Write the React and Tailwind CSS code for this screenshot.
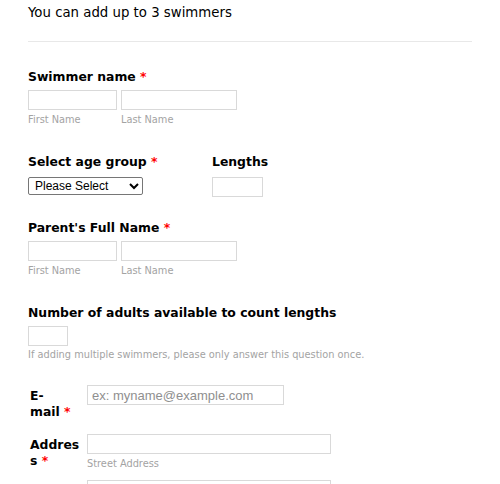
export default function App() {
  const label = "font-bold text-[12.4px] leading-[17px] text-black"
  const req = <span className="text-[#ff0000]"> *</span>
  const input = "block h-[20px] border border-[#d9d9d9] bg-white"
  const sub = "mt-[3px] text-[9.8px] leading-[14px] text-[#a3a3a3]"

  return (
    <div className="min-h-[484px] bg-white font-['DejaVu_Sans',Verdana,sans-serif] text-black">
      <div className="px-[28px] pt-[4px]">
        <p className="text-[13.3px] leading-[18px]">You can add up to 3 swimmers</p>
        <div className="mt-[19px] h-px bg-[#e8e8e8]" />

        <div className="mt-[26px]">
          <p className={label}>Swimmer name{req}</p>
          <div className="mt-[5px] flex gap-[4px]">
            <div>
              <input className={`${input} w-[89px]`} />
              <p className={sub}>First Name</p>
            </div>
            <div>
              <input className={`${input} w-[116px]`} />
              <p className={sub}>Last Name</p>
            </div>
          </div>
        </div>

        <div className="mt-[26px] flex">
          <div className="w-[184px]">
            <p className={label}>Select age group{req}</p>
            <select className="mt-[7px] block h-[18px] w-[115px] rounded-[2px] border border-[#767676] bg-white px-[2px] font-['Liberation_Sans',Arial,sans-serif] text-[12px] leading-[14px] text-black">
              <option>Please Select</option>
            </select>
          </div>
          <div>
            <p className={label}>Lengths</p>
            <input className={`${input} mt-[7px] h-[19px] w-[51px]`} />
          </div>
        </div>

        <div className="mt-[22px]">
          <p className={label}>Parent's Full Name{req}</p>
          <div className="mt-[5px] flex gap-[4px]">
            <div>
              <input className={`${input} w-[89px]`} />
              <p className={sub}>First Name</p>
            </div>
            <div>
              <input className={`${input} w-[116px]`} />
              <p className={sub}>Last Name</p>
            </div>
          </div>
        </div>

        <div className="mt-[26px]">
          <p className={label}>Number of adults available to count lengths</p>
          <input className={`${input} mt-[5px] w-[40px]`} />
          <p className="mt-[2px] text-[9.8px] leading-[14px] text-[#a3a3a3]">
            If adding multiple swimmers, please only answer this question once.
          </p>
        </div>

        <div className="mt-[23px] flex gap-[7px] pl-[2px]">
          <p className="w-[50px] pt-[3px] text-[12.4px] font-bold leading-[16px]">
            E-
            <br />
            mail{req}
          </p>
          <input
            placeholder="ex: myname@example.com"
            className={`${input} w-[197px] px-[4px] font-['Liberation_Sans',Arial,sans-serif] text-[13px] placeholder:text-[#8f8f8f]`}
          />
        </div>

        <div className="mt-[14px] flex gap-[7px] pl-[2px]">
          <p className="w-[50px] pt-[3px] text-[12.4px] font-bold leading-[16px]">
            Addres
            <br />
            s{req}
          </p>
          <div>
            <input className={`${input} w-[244px]`} />
            <p className={sub}>Street Address</p>
            <input className={`${input} mt-[9px] w-[244px]`} />
          </div>
        </div>
      </div>
    </div>
  )
}
